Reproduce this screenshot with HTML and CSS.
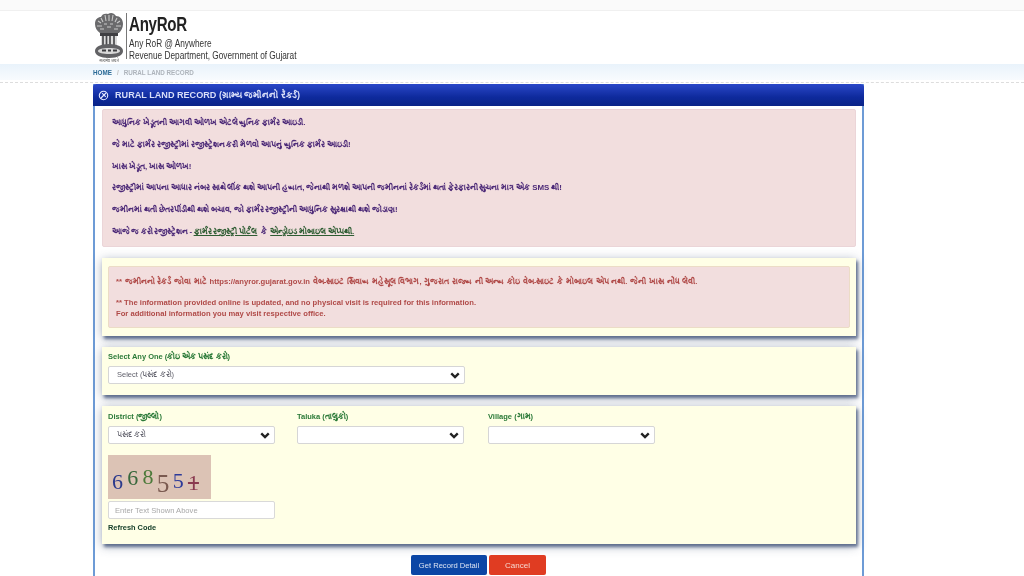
FILE: index.html
```html
<!DOCTYPE html>
<html lang="gu">
<head>
<meta charset="utf-8">
<title>AnyRoR</title>
<link rel="stylesheet" href="styles.css">
</head>
<body>
<div class="topstrip"></div>
<header class="masthead">
  <svg class="emblem" viewBox="0 0 30 50" aria-hidden="true">
    <path d="M1 12C1 7 4 5 7 5 8 2 11 1 14 2c3-2 6-1 8 2 4 0 7 3 7 8 0 4-2 7-4 9H6C3 19 1 16 1 12z" fill="#6a6a6c"/>
    <path d="M4 9l3 2M7 6l2 4M11 3l1 6M15 3v6M19 3l-1 6M23 6l-2 4M26 9l-3 2M3 14h5M10 12h3M16 12h3M22 14h5M6 17h4M13 15h4M20 17h4" stroke="#c9c9c9" stroke-width="1.100"/>
    <path d="M6 21h18v3H6z" fill="#3f3f42"/>
    <rect x="7" y="24" width="16" height="9" fill="#dcdcdc"/>
    <path d="M9 24v9M12.500 24v9M16 24v9M20 24v9" stroke="#4a4a4d" stroke-width="1.700"/>
    <path d="M1 39c0-4 5-7 14-7s14 3 14 7-5 7-14 7S1 43 1 39z" fill="#626265"/>
    <path d="M4 39c0-2 5-3 11-3s11 1 11 3-5 3-11 3S4 41 4 39z" fill="#d8d8d8"/>
    <path d="M8 38.500h4M14 38.500h3M19 38.500h4" stroke="#3d3d40" stroke-width="2"/>
    <text class="emblem-motto" x="15" y="50" text-anchor="middle">सत्यमेव जयते</text>
  </svg>
  <div class="brand">
    <div class="brand-text">
      <div class="brand-name">AnyRoR</div>
      <div class="brand-line">Any RoR @ Anywhere</div>
      <div class="brand-line">Revenue Department, Government of Gujarat</div>
    </div>
  </div>
</header>
<nav class="crumbs"><a class="crumb-home">HOME</a><span class="crumb-sep">/</span><span class="crumb-current">RURAL LAND RECORD</span></nav>
<main class="panel">
  <h1 class="panel-title">
    <svg class="title-icon" viewBox="0 0 12 12" aria-hidden="true"><circle cx="6" cy="6" r="4.600" fill="none" stroke="#e4e8ff" stroke-width="1.200"/><path d="M3 9L9 3M4.500 3.500l4 4" stroke="#e4e8ff" stroke-width="1.200"/></svg>
    RURAL LAND RECORD (ગ્રામ્ય જમીનનો રેકર્ડ)
  </h1>
  <section class="notice">
    <p>આધુનિક ખેડૂતની આગવી ઓળખ એટલે યુનિક ફાર્મર આઇડી.</p>
    <p>જે માટે ફાર્મર રજીસ્ટ્રીમાં રજીસ્ટ્રેશન કરી મેળવો આપનું યુનિક ફાર્મર આઇડી!</p>
    <p>ખાસ ખેડૂત, ખાસ ઓળખ!</p>
    <p>રજીસ્ટ્રીમાં આપના આધાર નંબર સાથે લીંક થશે આપની હયાત, જેનાથી મળશે આપની જમીનનાં રેકર્ડમાં થતાં ફેરફારની સુચના માત્ર એક SMS થી!</p>
    <p>જમીનમાં થતી છેતરપીંડીથી થશે બચાવ, જો ફાર્મર રજીસ્ટ્રીની આધુનિક સુરક્ષાથી થશે જોડાણ!</p>
    <p class="notice-cta">આજે જ કરો રજીસ્ટ્રેશન - <a class="notice-link">ફાર્મર રજીસ્ટ્રી પોર્ટલ</a> <span class="notice-or">કે</span> <a class="notice-link">એન્ડ્રોઇડ મોબાઇલ એપ્પથી.</a></p>
  </section>
  <section class="well well-info">
    <div class="alert">
      <p class="alert-first">** જમીનનો રેકર્ડ જોવા માટે https://anyror.gujarat.gov.in વેબ-સાઇટ સિવાય મહેસૂલ વિભાગ, ગુજરાત રાજ્ય ની અન્ય કોઇ વેબ-સાઇટ કે મોબાઇલ એપ નથી. જેની ખાસ નોંધ લેવી.</p>
      <p>** The information provided online is updated, and no physical visit is required for this information.</p>
      <p>For additional information you may visit respective office.</p>
    </div>
  </section>
  <section class="well well-choose">
    <label class="field-label">Select Any One (કોઇ એક પસંદ કરો)</label>
    <div class="select select-wide"><span>Select (પસંદ કરો)</span><svg class="chev" viewBox="0 0 12 8" aria-hidden="true"><path d="M1.500 1.500L6 6l4.500-4.500" fill="none" stroke="#222" stroke-width="2.800"/></svg></div>
  </section>
  <section class="well well-form">
    <div class="field-row">
      <div class="field">
        <label class="field-label">District (જીલ્લો)</label>
        <div class="select"><span>પસંદ કરો</span><svg class="chev" viewBox="0 0 12 8" aria-hidden="true"><path d="M1.500 1.500L6 6l4.500-4.500" fill="none" stroke="#222" stroke-width="2.800"/></svg></div>
      </div>
      <div class="field">
        <label class="field-label">Taluka (તાલુકો)</label>
        <div class="select"><span></span><svg class="chev" viewBox="0 0 12 8" aria-hidden="true"><path d="M1.500 1.500L6 6l4.500-4.500" fill="none" stroke="#222" stroke-width="2.800"/></svg></div>
      </div>
      <div class="field field-last">
        <label class="field-label">Village (ગામ)</label>
        <div class="select"><span></span><svg class="chev" viewBox="0 0 12 8" aria-hidden="true"><path d="M1.500 1.500L6 6l4.500-4.500" fill="none" stroke="#222" stroke-width="2.800"/></svg></div>
      </div>
    </div>
    <div class="captcha"><span class="d1">6</span><span class="d2">6</span><span class="d3">8</span><span class="d4">5</span><span class="d5">5</span><span class="d6">1</span></div>
    <div class="input">Enter Text Shown Above</div>
    <a class="refresh">Refresh Code</a>
  </section>
  <div class="actions">
    <button class="btn btn-primary">Get Record Detail</button>
    <button class="btn btn-danger">Cancel</button>
  </div>
</main>
</body>
</html>
```
FILE: styles.css
```css
* { box-sizing: border-box; }
html, body { margin: 0; padding: 0; height: 576px; overflow: hidden; background: #fff; }
body { font-family: "Liberation Sans", "Noto Sans", sans-serif; color: #333; filter: blur(.5px); }
p { margin: 0; }

.topstrip { height: 11px; background: #fafafa; border-bottom: 1px solid #f0f0f0; }

.masthead { height: 53px; padding: 1px 0 0 94px; display: flex; align-items: flex-start; gap: 2px; }
.emblem { width: 30px; height: 50px; flex: none; overflow: visible; }
.emblem-motto { font-size: 4px; fill: #555; font-family: "Noto Sans", "DejaVu Sans", sans-serif; }
.brand { height: 46px; margin-top: 1px; padding-left: 2px; border-left: 1px solid #777; color: #333; }
.brand-text { transform: scaleX(.72); transform-origin: left top; width: 240px; }
.brand-name { font-size: 21px; line-height: 20px; font-weight: 700; letter-spacing: -.4px; color: #222; margin-top: 1px; }
.brand-line { font-size: 11.500px; line-height: 12px; white-space: nowrap; }
.brand-name + .brand-line { margin-top: 3px; }

.crumbs { height: 16px; padding-left: 93px; display: flex; align-items: center; gap: 5px; font-size: 6.300px; font-weight: 700; background: linear-gradient(#e9f3fb, #f8fbfe); }
.crumb-home { color: #2a6a96; font-weight: 700; }
.crumb-sep { color: #bbb; }
.crumb-current { color: #aeb4bb; }

.panel { width: 771px; height: 492px; margin: 4px 0 0 93px; border: 2px solid #6d9bd6; border-top: 0; border-bottom: 0; position: relative; }
.panel::before { content: ""; position: absolute; left: 0; top: -2px; border-top: 1px dashed #ddd; margin-left: -95px; width: 1024px; }
.panel-title { margin: 0 -2px; height: 22px; padding-left: 5px; display: flex; align-items: center; gap: 6px; font-size: 9.100px; font-weight: 700; color: #d8def8; background: linear-gradient(#2a47c8, #0e2a9c 60%, #0a2488); border-radius: 3px 3px 0 0; }
.title-icon { width: 11px; height: 11px; flex: none; }

.notice { margin: 3px 6px 0 7px; height: 138px; padding: 3px 9px 4px; background: #f2dede; border: 1px solid #ebd5d8; border-radius: 2px; color: #4d2a78; font-size: 7.900px; font-weight: 700; word-spacing: -.3px; display: flex; flex-direction: column; justify-content: space-between; }
.notice p { line-height: 20px; white-space: nowrap; }
.notice-cta { word-spacing: -.8px; }
.notice-link { color: #2f5d33; text-decoration: underline; word-spacing: -.3px; }
.notice-or { margin: 0 2px; }

.well { margin: 0 6px 0 7px; background: #ffffe6; box-shadow: 2px 3px 3px rgba(50, 70, 110, .7), 0 2px 10px rgba(60, 80, 115, .45); }
.well-info { margin-top: 11px; height: 78px; padding: 8px 6px; }
.alert { height: 62px; padding: 9px 7px; background: #f2dede; border: 1px solid #ecdcc6; border-radius: 2px; color: #b04a48; font-size: 7.650px; font-weight: 700; line-height: 11px; }
.alert-first { margin-bottom: 10px; word-spacing: .6px; }

.well-choose { margin-top: 11px; height: 48px; padding: 5px 5px 0 6px; }
.well-form { margin-top: 11px; height: 138px; padding: 6px 5px 0 6px; }

.field-row { display: flex; gap: 22px; }
.field { width: 167px; }
.field-last { margin-left: 2px; }
.field-label { display: block; height: 11px; color: #2b7a38; font-size: 7.500px; font-weight: 700; line-height: 10px; white-space: nowrap; }
.select { width: 167px; height: 18px; margin-top: 3px; padding: 0 4px 0 8px; display: flex; align-items: center; justify-content: space-between; background: #fff; border: 1px solid #d6d6d6; border-radius: 2px; font-size: 7.500px; color: #5f5f6a; }
.select-wide { width: 357px; }
.chev { width: 10px; height: 7px; flex: none; }

.captcha { width: 103px; height: 44px; margin-top: 11px; padding: 10px 0 0 4px; display: flex; background: #dcc3b5; font-family: "Liberation Serif", serif; font-size: 22px; line-height: 30px; }
.captcha span { display: block; width: 15.200px; }
.d1 { color: #2c3a8c; transform: translateY(2px); }
.d2 { color: #38683c; transform: translateY(-2px); }
.d3 { color: #4c7a3a; transform: translateY(-3px); }
.d4 { color: #7a5a50; transform: translateY(4px) scale(1.150); }
.d5 { color: #2c3a9a; transform: translateY(1px); }
.d6 { color: #8a3a50; transform: translateY(3px); text-decoration: line-through; }

.input { width: 167px; height: 18px; margin: 2px 0 0; padding-left: 6px; display: flex; align-items: center; background: #fff; border: 1px solid #d9d9d9; border-radius: 2px; font-size: 7.600px; color: #a8a8a8; }
.refresh { display: block; margin-top: 4px; font-size: 7.400px; font-weight: 700; color: #17402a; }

.actions { margin-top: 11px; display: flex; justify-content: center; gap: 2px; }
.btn { height: 20px; padding: 0; border: 1px solid transparent; border-radius: 2px; font: 400 7.600px "Liberation Sans", sans-serif; color: #dbe3f2; }
.btn-primary { width: 76px; background: #0b46a5; }
.btn-danger { width: 57px; background: #e03c22; color: #f6d8d0; font-size: 8px; }
```
